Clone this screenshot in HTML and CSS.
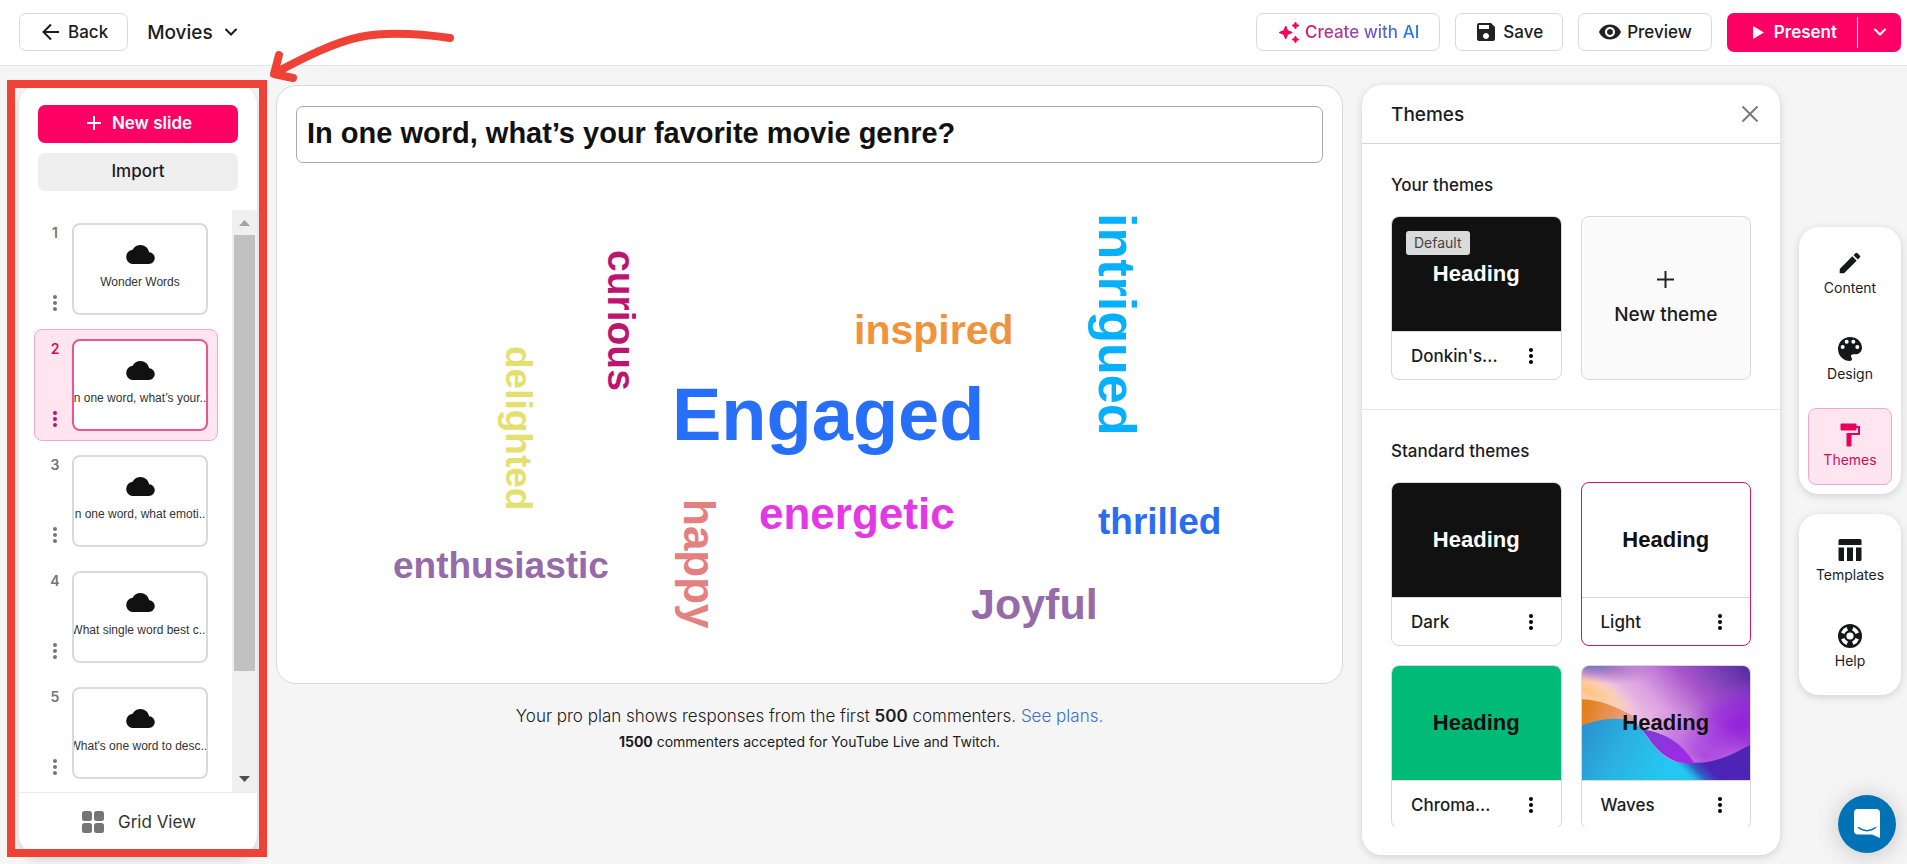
FILE: index.html
```html
<!DOCTYPE html>
<html lang="en">
<head>
<meta charset="utf-8">
<title>Movies</title>
<link rel="stylesheet" href="styles.css">
</head>
<body>
<svg class="defs" width="0" height="0" aria-hidden="true">
  <symbol id="cloud" viewBox="0 4 24 16"><path d="M19.35 10.04A7.49 7.49 0 0 0 12 4C9.11 4 6.6 5.64 5.35 8.04A5.994 5.994 0 0 0 0 14c0 3.310 2.690 6 6 6h13c2.760 0 5-2.240 5-5 0-2.640-2.050-4.780-4.650-4.960z"/></symbol>
  <symbol id="dots" viewBox="0 0 4 16"><circle cx="2" cy="2" r="2"/><circle cx="2" cy="8" r="2"/><circle cx="2" cy="14" r="2"/></symbol>
</svg>
<div class="app">
  <header class="topbar">
    <button class="btn back"><svg width="18" height="18" viewBox="0 0 18 18" fill="none" stroke="currentColor" stroke-width="2"><path d="M17 9H2M9 1.500 1.500 9 9 16.500"/></svg>Back</button>
    <button class="title">Movies<svg width="12" height="8" viewBox="0 0 12 8" fill="none" stroke="currentColor" stroke-width="2" stroke-linecap="round"><path d="M1 1.500l5 5 5-5"/></svg></button>
    <div class="actions">
      <button class="btn ai"><svg width="22" height="22" viewBox="0 0 22 22" fill="#f0055f"><path d="M6.700 5l1.900 4.600 4.700 1.900-4.700 1.900-1.900 4.700-1.900-4.700L.1 11.500l4.700-1.900zM16.500 1l1.100 2.400L20 4.500l-2.400 1.100L16.500 8l-1.100-2.400L13 4.500l2.400-1.100zM16.500 15l1.100 2.400 2.400 1.100-2.400 1.100-1.100 2.400-1.100-2.400-2.400-1.100 2.400-1.100z" stroke="#f0055f" stroke-linejoin="round"/></svg><span class="ai-text">Create with AI</span></button>
      <button class="btn save"><svg width="18" height="18" viewBox="3 3 18 18" fill="#222"><path d="M17 3H5a2 2 0 0 0-2 2v14a2 2 0 0 0 2 2h14a2 2 0 0 0 2-2V7l-4-4zm-5 16c-1.660 0-3-1.340-3-3s1.340-3 3-3 3 1.340 3 3-1.340 3-3 3zm3-10H5V5h10v4z"/></svg>Save</button>
      <button class="btn preview"><svg width="22" height="16" viewBox="1 4.500 22 15" fill="#222"><path d="M12 4.500C7 4.500 2.730 7.610 1 12c1.730 4.390 6 7.500 11 7.500s9.270-3.110 11-7.500c-1.730-4.390-6-7.500-11-7.500zM12 17c-2.760 0-5-2.240-5-5s2.240-5 5-5 5 2.240 5 5-2.240 5-5 5zm0-8c-1.660 0-3 1.340-3 3s1.340 3 3 3 3-1.340 3-3-1.340-3-3-3z"/></svg>Preview</button>
      <div class="present">
        <button class="present-main"><svg width="11" height="13" viewBox="0 0 11 13" fill="#fff"><path d="M0 0v13l11-6.500z"/></svg>Present</button>
        <button class="present-more" aria-label="Present options"><svg width="12" height="8" viewBox="0 0 12 8" fill="none" stroke="#fff" stroke-width="2" stroke-linecap="round"><path d="M1 1.500l5 5 5-5"/></svg></button>
      </div>
    </div>
  </header>

  <div class="workspace">
    <aside class="slides">
      <div class="slide-actions">
        <button class="new-slide"><svg width="14" height="14" viewBox="0 0 14 14" stroke="#fff" stroke-width="2"><path d="M7 0v14M0 7h14"/></svg>New slide</button>
        <button class="import">Import</button>
      </div>
      <div class="slide-scroll">
        <ol class="slide-list">
          <li class="slide"><div class="slide-side"><span>1</span><button aria-label="Slide options"><svg width="4" height="16"><use href="#dots"/></svg></button></div><div class="thumb"><svg width="29" height="19"><use href="#cloud"/></svg><span>Wonder Words</span></div></li>
          <li class="slide selected"><div class="slide-side"><span>2</span><button aria-label="Slide options"><svg width="4" height="16"><use href="#dots"/></svg></button></div><div class="thumb"><svg width="29" height="19"><use href="#cloud"/></svg><span>In one word, what’s your...</span></div></li>
          <li class="slide"><div class="slide-side"><span>3</span><button aria-label="Slide options"><svg width="4" height="16"><use href="#dots"/></svg></button></div><div class="thumb"><svg width="29" height="19"><use href="#cloud"/></svg><span>In one word, what emoti...</span></div></li>
          <li class="slide"><div class="slide-side"><span>4</span><button aria-label="Slide options"><svg width="4" height="16"><use href="#dots"/></svg></button></div><div class="thumb"><svg width="29" height="19"><use href="#cloud"/></svg><span>What single word best c...</span></div></li>
          <li class="slide"><div class="slide-side"><span>5</span><button aria-label="Slide options"><svg width="4" height="16"><use href="#dots"/></svg></button></div><div class="thumb"><svg width="29" height="19"><use href="#cloud"/></svg><span>What's one word to desc...</span></div></li>
        </ol>
        <div class="scrollbar">
          <svg class="up" width="11" height="6" viewBox="0 0 11 6"><path d="M0 6 5.500 0 11 6z"/></svg>
          <div class="scroll-track"><div class="scroll-thumb"></div></div>
          <svg class="down" width="11" height="6" viewBox="0 0 11 6"><path d="M0 0h11L5.500 6z"/></svg>
        </div>
      </div>
      <button class="grid-view"><svg width="22" height="22" viewBox="0 0 22 22" fill="#757575"><rect width="10" height="10" rx="2.500"/><rect x="12" width="10" height="10" rx="2.500"/><rect y="12" width="10" height="10" rx="2.500"/><rect x="12" y="12" width="10" height="10" rx="2.500"/></svg>Grid View</button>
      <div class="highlight"></div>
    </aside>

    <main class="stage">
      <section class="canvas">
        <input class="question" aria-label="Question" value="In one word, what’s your favorite movie genre?">
        <svg class="cloud-words" viewBox="0 0 1027 500">
          <text x="376" y="277" font-size="74" fill="#276ef9">Engaged</text>
          <text x="558" y="181" font-size="41" fill="#ef943c">inspired</text>
          <text x="463" y="366" font-size="44" fill="#e538e5">energetic</text>
          <text x="802" y="371" font-size="37" fill="#2a6df0">thrilled</text>
          <text x="97" y="415" font-size="37" fill="#966ba9">enthusiastic</text>
          <text x="675" y="456" font-size="43" fill="#966ba9">Joyful</text>
          <text transform="translate(312 87) rotate(90)" font-size="39" fill="#bd1470">curious</text>
          <text transform="translate(210 183) rotate(90)" font-size="37" fill="#e4e070">delighted</text>
          <text transform="translate(388 336) rotate(90)" font-size="44" fill="#e4807f">happy</text>
          <text transform="translate(803 50) rotate(90)" font-size="52" fill="#06b0fb">intrigued</text>
        </svg>
      </section>
      <p class="plan">Your pro plan shows responses from the first <b>500</b> commenters. <a href="#">See plans.</a></p>
      <p class="plan-sub"><b>1500</b> commenters accepted for YouTube Live and Twitch.</p>
    </main>

    <aside class="themes">
      <div class="themes-head"><h2>Themes</h2><button aria-label="Close"><svg width="18" height="18" viewBox="0 0 18 18" stroke="#7a7a7a" stroke-width="2"><path d="M1.500 1.500l15 15M16.500 1.500l-15 15"/></svg></button></div>
      <div class="themes-body">
        <section class="group">
          <h3>Your themes</h3>
          <div class="cards">
            <div class="card"><div class="swatch dark"><span class="badge">Default</span>Heading</div><div class="card-foot">Donkin's...<button aria-label="Theme options"><svg width="4" height="16"><use href="#dots"/></svg></button></div></div>
            <button class="card new-theme"><svg width="17" height="17" viewBox="0 0 17 17" stroke="#222" stroke-width="2"><path d="M8.500 0v17M0 8.500h17"/></svg>New theme</button>
          </div>
        </section>
        <section class="group">
          <h3>Standard themes</h3>
          <div class="cards">
            <div class="card"><div class="swatch dark">Heading</div><div class="card-foot">Dark<button aria-label="Theme options"><svg width="4" height="16"><use href="#dots"/></svg></button></div></div>
            <div class="card active"><div class="swatch">Heading</div><div class="card-foot">Light<button aria-label="Theme options"><svg width="4" height="16"><use href="#dots"/></svg></button></div></div>
            <div class="card"><div class="swatch green">Heading</div><div class="card-foot">Chroma...<button aria-label="Theme options"><svg width="4" height="16"><use href="#dots"/></svg></button></div></div>
            <div class="card"><div class="swatch">
              <svg class="waves" viewBox="0 0 508 342" preserveAspectRatio="none">
                <defs>
                  <linearGradient id="w-sky" gradientUnits="userSpaceOnUse" x1="150" y1="190" x2="430" y2="-60"><stop offset="0" stop-color="#f3cfe0"/><stop offset="0.300" stop-color="#dca0e2"/><stop offset="0.600" stop-color="#a856cc"/><stop offset="1" stop-color="#5a2ea4"/></linearGradient>
                  <radialGradient id="w-peach" gradientUnits="userSpaceOnUse" cx="0" cy="0" r="1" gradientTransform="translate(10 70) rotate(25) scale(190 62)"><stop offset="0" stop-color="#ffc27c"/><stop offset="0.500" stop-color="#ffd0a8" stop-opacity="0.850"/><stop offset="1" stop-color="#f6d0d8" stop-opacity="0"/></radialGradient>
                  <radialGradient id="w-corner" gradientUnits="userSpaceOnUse" cx="0" cy="0" r="1" gradientTransform="translate(10 -12) rotate(8) scale(220 60)"><stop offset="0" stop-color="#3f73b8"/><stop offset="0.500" stop-color="#9a6cc0" stop-opacity="0.700"/><stop offset="1" stop-color="#b878cc" stop-opacity="0"/></radialGradient>
                  <radialGradient id="w-violet" gradientUnits="userSpaceOnUse" cx="0" cy="0" r="1" gradientTransform="translate(480 170) rotate(-25) scale(190 120)"><stop offset="0" stop-color="#9420dc"/><stop offset="0.550" stop-color="#9a2be0" stop-opacity="0.600"/><stop offset="1" stop-color="#a040e0" stop-opacity="0"/></radialGradient>
                  <radialGradient id="w-pink" gradientUnits="userSpaceOnUse" cx="0" cy="0" r="1" gradientTransform="translate(370 270) rotate(30) scale(210 110)"><stop offset="0" stop-color="#b04ee0"/><stop offset="0.600" stop-color="#c070e0" stop-opacity="0.700"/><stop offset="1" stop-color="#d090e4" stop-opacity="0"/></radialGradient>
                  <linearGradient id="w-orange" x1="0" y1="0.500" x2="1" y2="0.700"><stop offset="0" stop-color="#e2801c"/><stop offset="0.600" stop-color="#eb9a72"/><stop offset="1" stop-color="#e0a0cc"/></linearGradient>
                  <linearGradient id="w-fold" x1="0" y1="0" x2="1" y2="1"><stop offset="0" stop-color="#7a3fd2"/><stop offset="1" stop-color="#a824ea"/></linearGradient>
                  <linearGradient id="w-blue" gradientUnits="userSpaceOnUse" x1="0" y1="190" x2="240" y2="320"><stop offset="0" stop-color="#2a92cf"/><stop offset="0.500" stop-color="#2bb2e2"/><stop offset="1" stop-color="#25c6f0"/></linearGradient>
                  <linearGradient id="w-indigo" gradientUnits="userSpaceOnUse" x1="328" y1="338" x2="370" y2="296"><stop offset="0" stop-color="#2399d8" stop-opacity="0"/><stop offset="0.500" stop-color="#2f62c4"/><stop offset="1" stop-color="#4e24b6"/></linearGradient>
                </defs>
                <rect width="508" height="342" fill="url(#w-sky)"/>
                <rect width="508" height="342" fill="url(#w-peach)"/>
                <rect width="508" height="342" fill="url(#w-corner)"/>
                <rect width="508" height="342" fill="url(#w-pink)"/>
                <rect width="508" height="342" fill="url(#w-violet)"/>
                <path d="M0 100c60 2 100 24 150 47l40 55L0 180z" fill="url(#w-orange)"/>
                <path d="M0 178c50-18 80-20 105-20 35 0 55 12 75 32 40 60 75 98 125 102l95 10v40H0z" fill="url(#w-blue)"/>
                <path d="M270 280c110 30 175-12 238-44v106H290z" fill="url(#w-indigo)"/>
                <path d="M180 190c70 10 120 40 160 103-90 2-120-50-160-103z" fill="url(#w-fold)"/>
              </svg><span class="on-waves">Heading</span></div><div class="card-foot">Waves<button aria-label="Theme options"><svg width="4" height="16"><use href="#dots"/></svg></button></div></div>
          </div>
        </section>
      </div>
    </aside>

    <nav class="tabs">
      <div class="tab-group">
        <button class="tab"><svg width="24" height="24" viewBox="1.500 1.500 21 21"><path d="M3 17.250V21h3.750L17.810 9.940l-3.750-3.750zM20.710 7.040a1 1 0 0 0 0-1.410l-2.340-2.340a1 1 0 0 0-1.410 0l-1.830 1.830 3.750 3.750z"/></svg>Content</button>
        <button class="tab"><svg width="24" height="24" viewBox="3 3 18 18"><path d="M12 3a9 9 0 0 0 0 18c.83 0 1.500-.67 1.500-1.500 0-.39-.15-.74-.39-1.010-.23-.26-.38-.61-.38-.99 0-.83.670-1.500 1.500-1.500H16c2.760 0 5-2.240 5-5 0-4.420-4.030-8-9-8zm-5.500 9a1.500 1.500 0 1 1 0-3 1.500 1.500 0 0 1 0 3zm3-4a1.500 1.500 0 1 1 0-3 1.500 1.500 0 0 1 0 3zm5 0a1.500 1.500 0 1 1 0-3 1.500 1.500 0 0 1 0 3zm3 4a1.500 1.500 0 1 1 0-3 1.500 1.500 0 0 1 0 3z"/></svg>Design</button>
        <button class="tab current"><svg width="24" height="24" viewBox="0 0 24 24"><path d="M18.500 3V1.500a1 1 0 0 0-1-1h-14a1 1 0 0 0-1 1v5a1 1 0 0 0 1 1h14a1 1 0 0 0 1-1V5h1.500v5H8.500v12.500a1 1 0 0 0 1 1h3a1 1 0 0 0 1-1V12H22V3z"/></svg>Themes</button>
      </div>
      <div class="tab-group">
        <button class="tab"><svg width="24" height="24" viewBox="0 0 24 24"><path d="M2 1h20a1.500 1.500 0 0 1 1.500 1.500V7H.5V2.500A1.500 1.500 0 0 1 2 1zM.5 9.500H6V23H2a1.500 1.500 0 0 1-1.500-1.500zM9 9.500h6V23H9zM18 9.500h5.500v12A1.500 1.500 0 0 1 22 23h-4z"/></svg>Templates</button>
        <button class="tab"><svg width="24" height="24" viewBox="2 2 20 20"><path d="M12 2a10 10 0 1 0 0 20 10 10 0 0 0 0-20zm7.460 7.120-2.780 1.150a4.980 4.980 0 0 0-2.950-2.940l1.150-2.780c2.100.8 3.770 2.470 4.580 4.570zM12 15a3 3 0 1 1 0-6 3 3 0 0 1 0 6zM9.130 4.540l1.170 2.780a5 5 0 0 0-2.980 2.970L4.540 9.130a7.980 7.980 0 0 1 4.590-4.590zM4.540 14.870l2.780-1.150a4.970 4.970 0 0 0 2.970 2.960l-1.170 2.780a7.996 7.996 0 0 1-4.580-4.590zm10.340 4.590-1.150-2.780a4.980 4.980 0 0 0 2.950-2.970l2.780 1.170a8.007 8.007 0 0 1-4.580 4.580z"/></svg>Help</button>
      </div>
    </nav>
  </div>

  <svg class="arrow" width="200" height="60" viewBox="262 26 200 60" fill="none" stroke="#f04137" stroke-width="8" stroke-linecap="round" stroke-linejoin="round"><path d="M450 38C415 33 385 32 360 37 335 42 305 57 275 73M279 55l-5 19 19 4"/></svg>
  <button class="chat" aria-label="Open chat"><svg width="26" height="30" viewBox="0 0 26 30"><path d="M4 0h18a4 4 0 0 1 4 4v25l-8-3.500H4a4 4 0 0 1-4-4V4a4 4 0 0 1 4-4z" fill="#fff"/><path d="M4.500 18.500c5 4.200 12 4.200 17 0" fill="none" stroke="#0272b6" stroke-width="1.500" stroke-linecap="round"/></svg></button>
</div>
</body>
</html>
```
FILE: styles.css
```css
* { box-sizing: border-box; }
body {
  margin: 0;
  background: #f5f5f5;
  color: #1c1c1e;
  font-family: Inter, "Liberation Sans", sans-serif;
  font-size: 17px;
}
button {
  margin: 0;
  padding: 0;
  border: 0;
  background: none;
  color: inherit;
  font: inherit;
  cursor: pointer;
}
svg { display: block; flex: none; }
h2, h3, p, ol { margin: 0; padding: 0; }
.defs { position: absolute; }

.app {
  position: relative;
  display: flex;
  flex-direction: column;
  height: 100vh;
  min-height: 720px;
}

/* Top bar */
.topbar {
  display: flex;
  align-items: center;
  flex: none;
  height: 66px;
  padding: 0 6px 1px 19px;
  background: #fff;
  border-bottom: 1px solid #e6e6e6;
  font-weight: 500;
}
.btn {
  display: flex;
  align-items: center;
  height: 38px;
  border: 1px solid #d9d9d9;
  border-radius: 7px;
  background: #fff;
}
.back { gap: 8px; padding: 0 19px 0 22px; }
.title {
  display: flex;
  align-items: center;
  gap: 12px;
  margin-left: 19px;
  font-size: 19px;
}
.actions { display: flex; gap: 15px; margin-left: auto; }
.ai { gap: 4px; padding: 0 20px 0 22px; }
.ai-text {
  background: linear-gradient(90deg, #e0106e, #7f55c0 55%, #2379e8 90%);
  -webkit-background-clip: text;
  background-clip: text;
  color: transparent;
}
.save { gap: 8px; padding: 0 19px 0 21px; }
.preview { gap: 6px; padding: 0 19px 0 20px; }
.present {
  display: flex;
  height: 39px;
  border-radius: 7px;
  background: #ff0064;
  color: #fff;
  font-weight: 600;
}
.present-main { display: flex; align-items: center; gap: 10px; padding: 0 20px 0 26px; }
.present-more {
  display: grid;
  place-items: center;
  width: 44px;
  margin: 4px 0;
  border-left: 1px solid #fff;
}

/* Workspace columns */
.workspace {
  display: flex;
  flex: 1;
  gap: 19px;
  min-height: 0;
  padding: 19px 6px 9px 19px;
}

/* Slide list */
.slides {
  position: relative;
  display: flex;
  flex-direction: column;
  flex: none;
  width: 238px;
  border-radius: 20px;
  background: #fff;
  box-shadow: 0 4px 10px rgba(0, 0, 0, 0.15);
}
.slide-actions {
  display: grid;
  gap: 10px;
  padding: 20px 19px 19px;
}
.new-slide, .import {
  display: flex;
  align-items: center;
  justify-content: center;
  gap: 11px;
  height: 38px;
  padding-bottom: 2px;
  border-radius: 7px;
  font-weight: 500;
}
.new-slide { padding-left: 3px; background: #ff0064; color: #fff; font-weight: 600; }
.import { background: #eee; }
.slide-scroll {
  display: flex;
  flex: 1;
  justify-content: space-between;
  min-height: 0;
}
.slide-list {
  display: flex;
  flex-direction: column;
  gap: 4px;
  padding: 3px 0 0 15px;
  overflow: hidden;
  list-style: none;
}
.slide {
  display: flex;
  flex: none;
  gap: 6px;
  padding: 9px;
  border: 1px solid transparent;
  border-radius: 8px;
}
.slide.selected { border-color: #f5a8c8; background: #ffe5ef; }
.slide-side {
  display: flex;
  flex-direction: column;
  align-items: center;
  justify-content: space-between;
  width: 22px;
  padding: 2px 0 4px;
  color: #757575;
  fill: #757575;
  font-size: 14px;
  font-weight: 600;
}
.slide-side span { line-height: 16px; }
.selected .slide-side { color: #c9115b; fill: #c9115b; }
.thumb {
  display: flex;
  flex-direction: column;
  align-items: center;
  gap: 11px;
  width: 136px;
  height: 92px;
  padding-top: 20px;
  border: 2px solid #dadada;
  border-radius: 8px;
  background: #fff;
  overflow: hidden;
  color: #333;
  fill: #111;
  font-family: "Liberation Sans", Arial, sans-serif;
  font-size: 12px;
  white-space: nowrap;
}
.selected .thumb { border-color: #e8588f; }
.scrollbar {
  display: flex;
  flex-direction: column;
  align-items: center;
  gap: 9px;
  width: 25px;
  padding: 10px 0;
  background: #f0f0f0;
}
.up { fill: #a3a3a3; }
.down { fill: #505050; }
.scroll-track { flex: 1; width: 21px; }
.scroll-thumb { height: 82%; background: #c1c1c1; }
.grid-view {
  display: flex;
  align-items: center;
  justify-content: center;
  gap: 14px;
  flex: none;
  height: 63px;
  padding: 0 0 5px 2px;
  border-top: 1px solid #ececec;
  color: #333;
}
.highlight {
  position: absolute;
  inset: -5px -10px -2px -12px;
  border: 8px solid #f04137;
  pointer-events: none;
}

/* Slide canvas */
.stage { flex: 1; min-width: 0; text-align: center; }
.canvas {
  padding: 20px 19px 0;
  border: 1px solid #d9d9d9;
  border-radius: 20px;
  background: #fff;
}
.question {
  display: block;
  width: 100%;
  height: 57px;
  padding: 0 10px 3px;
  border: 1px solid #aaa;
  border-radius: 7px;
  background: #fff;
  color: #111;
  font: bold 29px "Liberation Sans", Arial, sans-serif;
}
.cloud-words {
  width: 100%;
  height: auto;
  margin: 0 0 20px;
  font-family: "Liberation Sans", Arial, sans-serif;
  font-weight: bold;
}
.plan { margin-top: 21px; font-weight: 300; line-height: 22px; }
.plan b { font-weight: 600; }
.plan a { color: #3f6fd1; text-decoration: none; }
.plan-sub { margin-top: 5px; font-size: 14px; line-height: 20px; }

/* Themes panel */
.themes {
  display: flex;
  flex-direction: column;
  flex: none;
  width: 418px;
  padding-bottom: 28px;
  border-radius: 20px;
  background: #fff;
  box-shadow: 0 2px 8px rgba(0, 0, 0, 0.15);
  font-weight: 500;
}
.themes-head {
  display: flex;
  align-items: center;
  justify-content: space-between;
  flex: none;
  height: 59px;
  padding: 0 21px 0 29px;
  border-bottom: 1px solid #d6d6d6;
}
h2 { font-size: 19px; font-weight: 500; }
h3 { font-size: 17px; font-weight: 500; line-height: 20px; }
.themes-body { flex: 1; min-height: 0; overflow: hidden; }
.group { padding: 31px 29px 29px; }
.group + .group { border-top: 1px solid #e8e8e8; }
.cards {
  display: grid;
  grid-template-columns: 1fr 1fr;
  gap: 19px;
  margin-top: 21px;
}
.card {
  height: 164px;
  border: 1px solid #d9d9d9;
  border-radius: 8px;
  background: #fff;
  overflow: hidden;
}
.card.active { border-color: #d01664; }
.swatch {
  position: relative;
  display: grid;
  place-items: center;
  height: 115px;
  border-bottom: 1px solid #d9d9d9;
  color: #111;
  font: bold 22px "Liberation Sans", Arial, sans-serif;
}
.dark { background: #111; color: #fff; }
.green { background: #00ba77; }
.waves { position: absolute; inset: 0; width: 100%; height: 100%; }
.on-waves { position: relative; }
.badge {
  position: absolute;
  top: 14px;
  left: 14px;
  padding: 0 8px;
  border-radius: 3px;
  background: #dadada;
  color: #444;
  font: 14px/24px Inter, sans-serif;
}
.card-foot {
  display: flex;
  align-items: center;
  justify-content: space-between;
  height: 47px;
  padding: 0 28px 0 19px;
}
.new-theme {
  display: flex;
  flex-direction: column;
  align-items: center;
  justify-content: center;
  gap: 15px;
  background: #fafafa;
  font-size: 19px;
}

/* Tool tabs */
.tabs {
  display: flex;
  flex-direction: column;
  justify-content: center;
  gap: 20px;
  flex: none;
  width: 102px;
  padding-bottom: 18px;
}
.tab-group {
  display: grid;
  gap: 9px;
  padding: 9px;
  border-radius: 20px;
  background: #fff;
  box-shadow: 0 2px 8px rgba(0, 0, 0, 0.15);
}
.tab {
  display: flex;
  flex-direction: column;
  align-items: center;
  gap: 4px;
  height: 77px;
  padding-top: 14px;
  border: 1px solid transparent;
  border-radius: 8px;
  font-size: 14px;
  line-height: 18px;
  fill: #15181a;
}
.tab.current { border-color: #f5a8c8; background: #ffe5ef; color: #c9115b; fill: #e6005c; }

/* Overlays */
.arrow { position: absolute; top: 26px; left: 262px; pointer-events: none; }
.chat {
  position: absolute;
  right: 11px;
  bottom: 11px;
  display: grid;
  place-items: center;
  width: 58px;
  height: 58px;
  border-radius: 50%;
  background: #0272b6;
  box-shadow: 0 2px 24px rgba(0, 0, 0, 0.2);
}
```
